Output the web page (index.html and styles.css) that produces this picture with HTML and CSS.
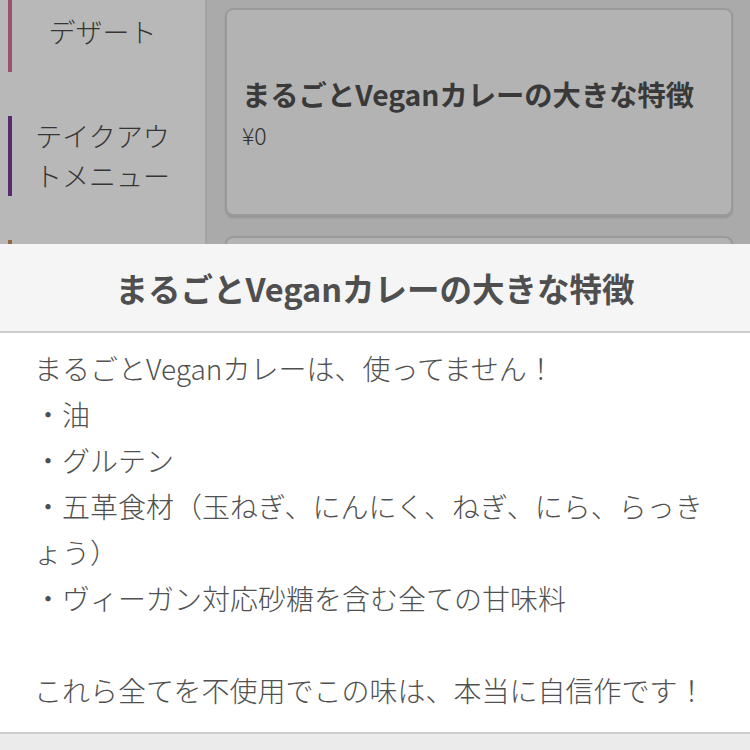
FILE: index.html
```html
<!DOCTYPE html>
<html lang="ja">
<head>
<meta charset="utf-8">
<link rel="stylesheet" href="styles.css">
</head>
<body>
<div class="page">
  <nav class="sidebar">
    <div class="cat cat-pink"><span class="cat-label">デザート</span></div>
    <div class="cat cat-purple"><span class="cat-label">テイクアウトメニュー</span></div>
    <div class="cat cat-brown"><span class="cat-label">&nbsp;</span></div>
  </nav>
  <main class="main">
    <div class="card">
      <div class="card-title">まるごとVeganカレーの大きな特徴</div>
      <div class="card-price">¥0</div>
    </div>
    <div class="card"></div>
  </main>
</div>
<div class="overlay"></div>
<section class="sheet">
  <header class="sheet-head">まるごとVeganカレーの大きな特徴</header>
  <div class="sheet-body">まるごとVeganカレーは、使ってません！<br>・油<br>・グルテン<br>・五革食材（玉ねぎ、にんにく、ねぎ、にら、らっきょう）<br>・ヴィーガン対応砂糖を含む全ての甘味料<br><br>これら全てを不使用でこの味は、本当に自信作です！</div>
  <footer class="sheet-foot"></footer>
</section>
</body>
</html>
```
FILE: styles.css
```css
html, body {
  margin: 0;
  padding: 0;
  width: 750px;
  height: 750px;
  overflow: hidden;
  font-family: "Noto Sans CJK JP", "Noto Sans", sans-serif;
  color: #555;
}
.page {
  display: flex;
  height: 750px;
}
.sidebar {
  flex: none;
  background: #fff;
  border-right: 2px solid #e2e2e2;
  display: flex;
  flex-direction: column;
  gap: 44px;
  padding-left: 8px;
  box-sizing: border-box;
  width: 207px;
  overflow: hidden;
}
.cat {
  height: 80px;
  flex: none;
  display: flex;
  align-items: center;
  border-left: 4px solid transparent;
  padding-right: 12px;
}
.cat:first-child { margin-top: -8px; }
.cat-pink { border-left-color: #d9709c; }
.cat-purple { border-left-color: #7a3c99; }
.cat-brown { border-left-color: #c9925e; }
.cat-label {
  width: 142px;
  margin: 0 auto;
  text-align: center;
  font-size: 27px;
  font-weight: 300;
  line-height: 40px;
  color: #4a4a4a;
}
.main {
  flex: 1;
  background: #ececec;
  padding: 8px 17px 0 18px;
  display: flex;
  flex-direction: column;
  gap: 20px;
}
.card {
  height: 208px;
  flex: none;
  box-sizing: border-box;
  background: #f9f9f9;
  border: 2px solid #d6d6d6;
  border-radius: 8px;
  box-shadow: 0 2px 2px rgba(0,0,0,0.12);
  padding: 0 15px 0;
  display: flex;
  flex-direction: column;
  justify-content: center;
}
.card-title {
  font-size: 28.3px;
  font-weight: 700;
  line-height: 40px;
  color: #505050;
  white-space: nowrap;
}
.card-price {
  font-size: 23px;
  font-weight: 300;
  line-height: 30px;
  margin-top: 6px;
  color: #444;
}
.overlay {
  position: absolute;
  inset: 0;
  background: rgba(0,0,0,0.28);
}
.sheet {
  position: absolute;
  left: 0;
  right: 0;
  top: 244px;
  bottom: 0;
  display: flex;
  flex-direction: column;
  background: #fff;
}
.sheet-head {
  height: 87px;
  flex: none;
  background: #f5f5f5;
  border-bottom: 2px solid #cdcdcd;
  display: flex;
  align-items: center;
  justify-content: center;
  font-size: 32.5px;
  font-weight: 700;
  color: #4f4f4f;
}
.sheet-body {
  padding: 12px 34px 19px;
  font-size: 28px;
  font-weight: 300;
  line-height: 46px;
  color: #505050;
}
.sheet-foot {
  flex: 1;
  background: #ebebeb;
  border-top: 2px solid #cdcdcd;
}
```
